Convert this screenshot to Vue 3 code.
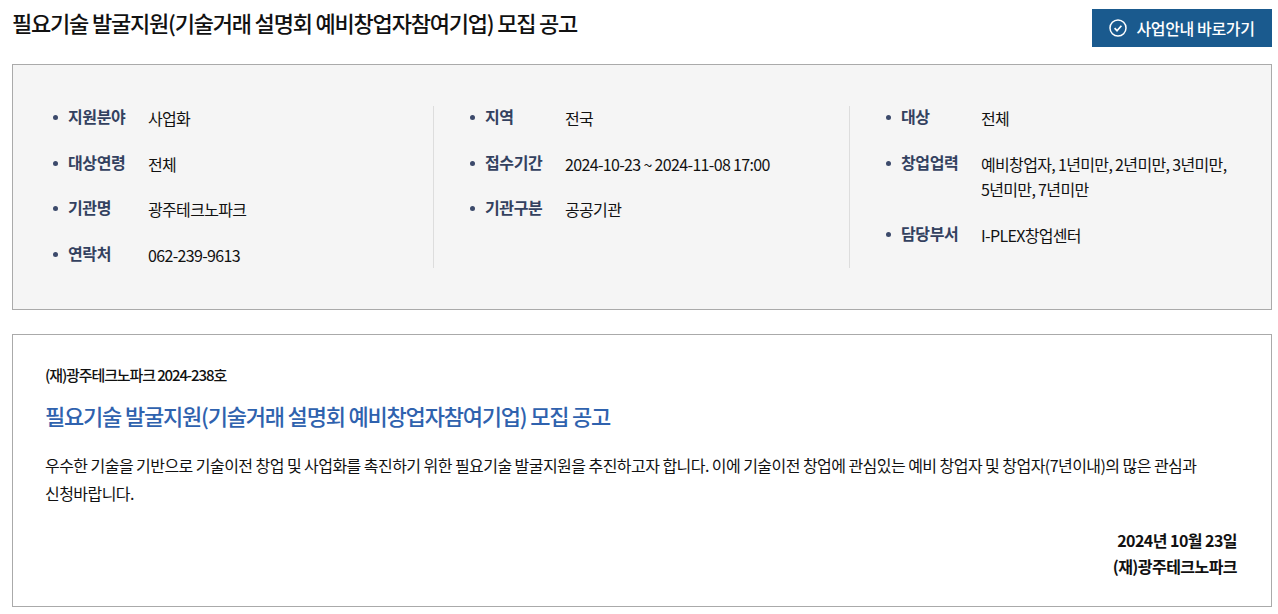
<script setup>
const columns = [
  { rows: [
    { label: '지원분야', value: ['사업화'] },
    { label: '대상연령', value: ['전체'] },
    { label: '기관명', value: ['광주테크노파크'] },
    { label: '연락처', value: ['062-239-9613'] },
  ]},
  { rows: [
    { label: '지역', value: ['전국'] },
    { label: '접수기간', value: ['2024-10-23 ~ 2024-11-08 17:00'] },
    { label: '기관구분', value: ['공공기관'] },
  ]},
  { rows: [
    { label: '대상', value: ['전체'] },
    { label: '창업업력', value: ['예비창업자, 1년미만, 2년미만, 3년미만,', '5년미만, 7년미만'] },
    { label: '담당부서', value: ['I-PLEX창업센터'] },
  ]},
]
</script>

<template>
  <div class="page">
    <header class="head">
      <h1 class="title">필요기술 발굴지원(기술거래 설명회 예비창업자참여기업) 모집 공고</h1>
      <a class="go" href="#">
        <svg width="18" height="18" viewBox="0 0 18 18" fill="none" stroke="#fff" stroke-width="1.5">
          <circle cx="9" cy="9" r="8" />
          <path d="M5.6 9.2l2.4 2.5 4.4-5" stroke-width="1.7" />
        </svg>
        <span>사업안내 바로가기</span>
      </a>
    </header>

    <section class="info">
      <div v-for="(col, i) in columns" :key="i" class="col">
        <div v-for="row in col.rows" :key="row.label" class="row">
          <span class="dot"></span>
          <span class="label">{{ row.label }}</span>
          <div class="value">
            <div v-for="line in row.value" :key="line">{{ line }}</div>
          </div>
        </div>
      </div>
    </section>

    <section class="body">
      <p class="num">(재)광주테크노파크 2024-238호</p>
      <h2 class="sub">필요기술 발굴지원(기술거래 설명회 예비창업자참여기업) 모집 공고</h2>
      <p class="text">우수한 기술을 기반으로 기술이전 창업 및 사업화를 촉진하기 위한 필요기술 발굴지원을 추진하고자 합니다. 이에 기술이전 창업에 관심있는 예비 창업자 및 창업자(7년이내)의 많은 관심과 신청바랍니다.</p>
      <div class="sign">
        <div>2024년 10월 23일</div>
        <div>(재)광주테크노파크</div>
      </div>
    </section>
  </div>
</template>

<style>
html, body { background: #fff; }
</style>

<style scoped>
.page {
  width: 1260px;
  padding: 9px 6px 0 12px;
  font-family: "Noto Sans CJK KR", "Noto Sans", sans-serif;
  color: #111;
}
.head {
  display: flex;
  justify-content: space-between;
  align-items: flex-start;
  height: 55px;
}
.title {
  margin: 0;
  font-size: 22px;
  line-height: 26px;
  font-weight: 500;
  letter-spacing: -1.2px;
}
.go {
  width: 180px;
  height: 38px;
  display: flex;
  align-items: center;
  justify-content: center;
  gap: 9px;
  background: #1a5a8e;
  color: #fff;
  font-size: 16px;
  font-weight: 500;
  letter-spacing: -0.35px;
  text-decoration: none;
}
.info {
  box-sizing: border-box;
  height: 246px;
  border: 1px solid #aaa;
  background: #f5f5f5;
  padding: 41px 4px;
  display: grid;
  grid-template-columns: repeat(3, 416px);
}
.col {
  height: 162px;
  padding-left: 36px;
  border-left: 1px solid #ddd;
}
.col:first-child { border-left: 0; }
.row {
  display: flex;
  align-items: flex-start;
  margin-bottom: 20px;
  font-size: 16px;
  line-height: 25.7px;
}
.dot {
  width: 5px;
  height: 5px;
  border-radius: 50%;
  background: #3c4a6b;
  margin: 9px 10px 0 0;
  flex: none;
}
.label {
  width: 80px;
  flex: none;
  font-weight: 700;
  color: #33415f;
  letter-spacing: -0.4px;
  position: relative;
  top: -2px;
}
.value {
  letter-spacing: -0.66px;
  color: #111;
}
.body {
  box-sizing: border-box;
  margin-top: 24px;
  height: 273px;
  border: 1px solid #aaa;
  padding: 28px 32px 0;
}
.num {
  margin: 0;
  font-size: 15px;
  line-height: 24px;
  font-weight: 500;
  letter-spacing: -1.12px;
}
.sub {
  margin: 15px 0 0;
  font-size: 22px;
  line-height: 26px;
  font-weight: 500;
  letter-spacing: -1.2px;
  color: #2f62ae;
}
.text {
  margin: 23px 0 0;
  font-size: 16px;
  line-height: 28px;
  letter-spacing: -0.55px;
  color: #111;
  word-break: keep-all;
}
.sign {
  margin-top: 20px;
  text-align: right;
  font-size: 16px;
  line-height: 26px;
  font-weight: 700;
  letter-spacing: -0.55px;
  padding-right: 2px;
}
</style>
